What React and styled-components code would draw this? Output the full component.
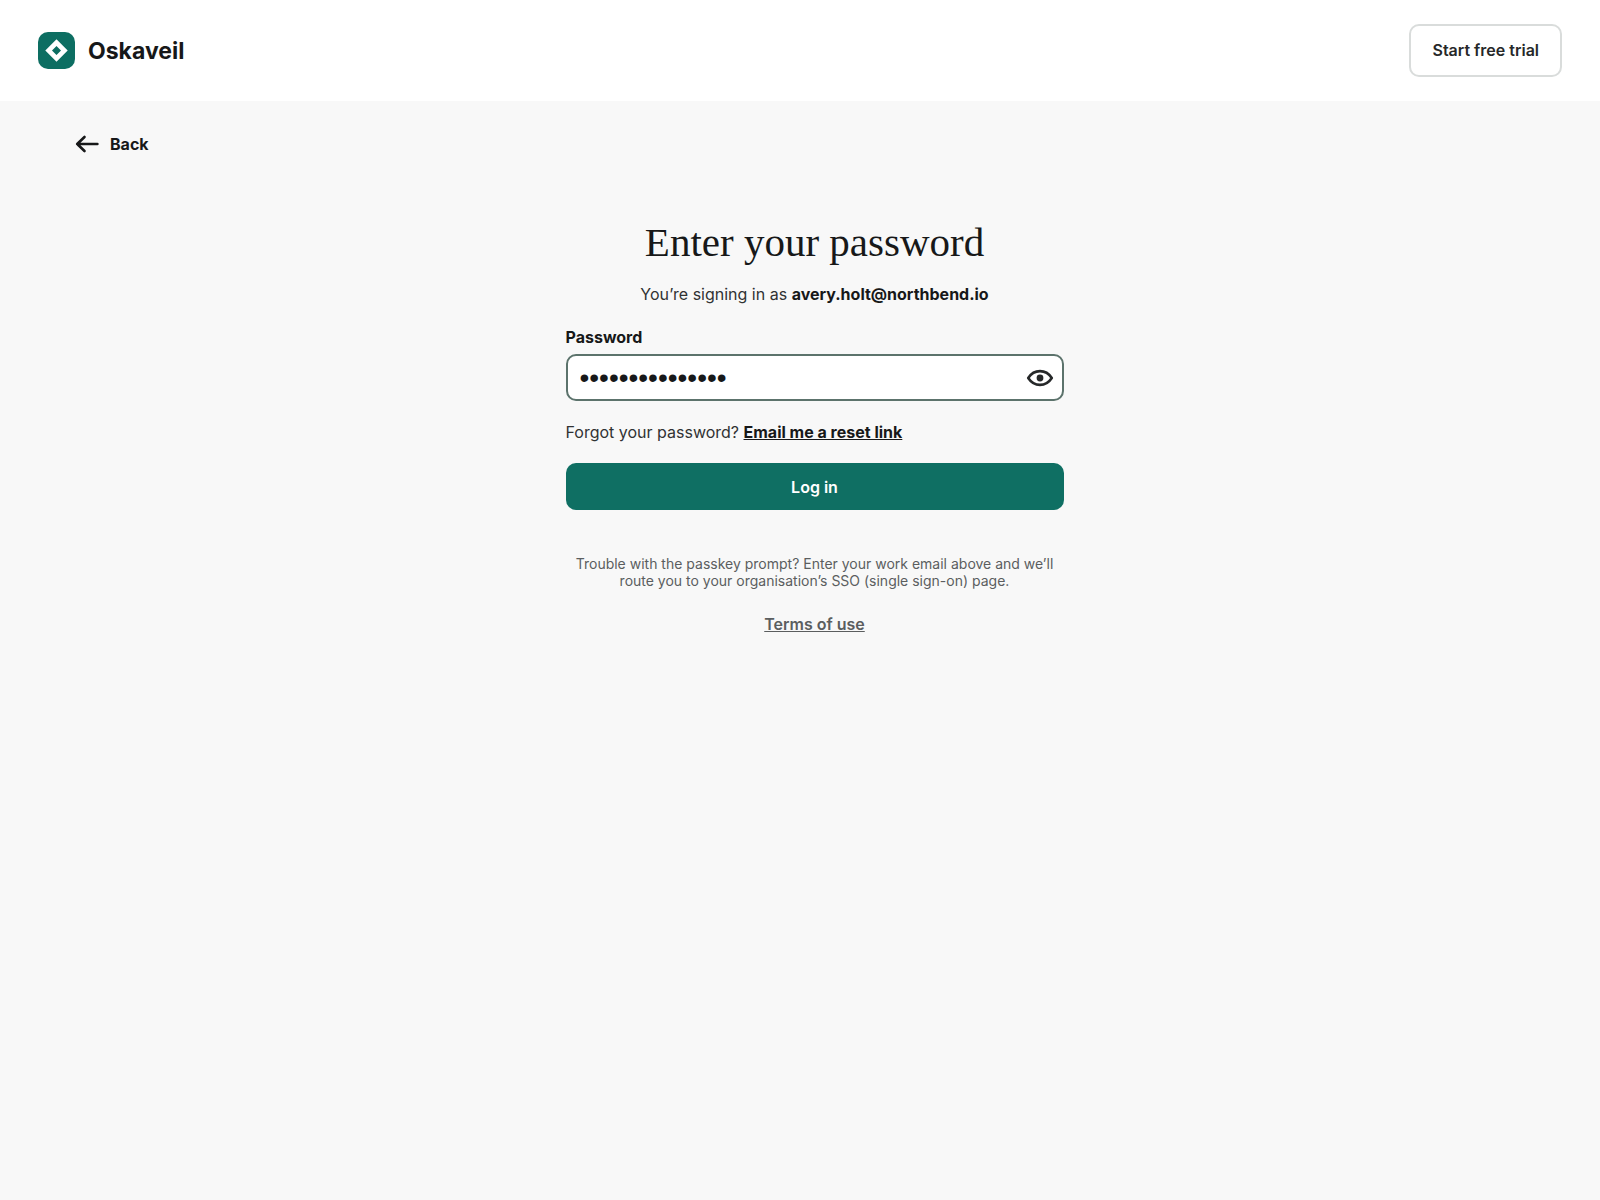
import React, { useState } from 'react'
import styled, { createGlobalStyle } from 'styled-components'

function App() {
   const [password, setPassword] = useState('northbend-login')
   const [visible, setVisible] = useState(false)
   return (
      <Page>
         <GlobalStyle />
         <Header>
            <Brand href="#">
               <LogoMark viewBox="0 0 37 37" aria-hidden="true">
                  <rect width="37" height="37" rx="10" fill="#0d6e62" />
                  <path
                     fill="#fff"
                     fillRule="evenodd"
                     d="M18.5 7.3 29.7 18.5 18.5 29.7 7.3 18.5ZM18.5 14 14 18.5 18.5 23 23 18.5Z"
                  />
               </LogoMark>
               Oskaveil
            </Brand>
            <TrialButton type="button">Start free trial</TrialButton>
         </Header>
         <Main>
            <BackLink href="#">
               <svg viewBox="0 0 24 18" aria-hidden="true">
                  <path d="M9.5 2 2.2 9 9.5 16M2.2 9H22.4" />
               </svg>
               Back
            </BackLink>
            <Content>
               <Title>Enter your password</Title>
               <Subtitle>
                  You’re signing in as <strong>avery.holt@northbend.io</strong>
               </Subtitle>
               <Form onSubmit={(e) => e.preventDefault()}>
                  <Label htmlFor="password">Password</Label>
                  <Field>
                     <Input
                        id="password"
                        type={visible ? 'text' : 'password'}
                        value={password}
                        onChange={(e) => setPassword(e.target.value)}
                     />
                     <Toggle
                        type="button"
                        aria-label="Show password"
                        onClick={() => setVisible(!visible)}
                     >
                        <svg viewBox="0 0 28 18" aria-hidden="true">
                           <path d="M2.2 9C5 4.7 9.2 2.1 14 2.1S23 4.7 25.8 9C23 13.3 18.8 15.9 14 15.9S5 13.3 2.2 9Z" />
                           <circle cx="14" cy="9" r="3.4" />
                        </svg>
                     </Toggle>
                  </Field>
                  <Forgot>
                     Forgot your password? <a href="#">Email me a reset link</a>
                  </Forgot>
                  <Submit type="submit">Log in</Submit>
               </Form>
               <Note>
                  Trouble with the passkey prompt? Enter your work email above and
                  we’ll route you to your organisation’s SSO (single sign-on) page.
               </Note>
               <Terms href="#">Terms of use</Terms>
            </Content>
         </Main>
      </Page>
   )
}

export default App

const GlobalStyle = createGlobalStyle`
   * {
      box-sizing: border-box;
   }
   body {
      margin: 0;
      background: #f8f8f8;
      color: #171819;
      font-family: Inter, 'Liberation Sans', sans-serif;
      font-size: 16px;
      line-height: 20px;
   }
   button,
   input {
      font: inherit;
   }
`
const Page = styled.div`
   display: flex;
   flex-direction: column;
   min-height: 100vh;
`
const Header = styled.header`
   display: flex;
   justify-content: space-between;
   align-items: center;
   padding: 24px 38px;
   background: #fff;
`
const Brand = styled.a`
   display: flex;
   align-items: center;
   gap: 13px;
   color: #171819;
   font-size: 23px;
   font-weight: 700;
   text-decoration: none;
`
const LogoMark = styled.svg`
   width: 37px;
   height: 37px;
`
const TrialButton = styled.button`
   padding: 14px 21px;
   border: 2px solid #d9dcdb;
   border-radius: 10px;
   background: #fff;
   color: #262829;
   line-height: 21px;
   font-weight: 600;
   cursor: pointer;
`
const Main = styled.main`
   display: flex;
   flex-direction: column;
   padding: 33px 46px 64px 75px;
`
const BackLink = styled.a`
   display: flex;
   align-items: center;
   align-self: flex-start;
   gap: 11px;
   color: #171819;
   font-weight: 700;
   text-decoration: none;
   svg {
      width: 24px;
      height: 18px;
      fill: none;
      stroke: currentColor;
      stroke-width: 2.6;
      stroke-linecap: round;
      stroke-linejoin: round;
   }
`
const Content = styled.div`
   display: flex;
   flex-direction: column;
   align-items: center;
   width: 100%;
   max-width: 498px;
   margin: 64px auto 0;
   text-align: center;
`
const Title = styled.h1`
   margin: 0;
   font-family: 'Liberation Serif', serif;
   font-size: 41px;
   font-weight: 400;
   line-height: 48px;
`
const Subtitle = styled.p`
   margin: 18px 0 0;
   color: #303233;
   strong {
      color: #171819;
      font-weight: 700;
   }
`
const Form = styled.form`
   display: flex;
   flex-direction: column;
   width: 100%;
   margin-top: 23px;
   text-align: left;
`
const Label = styled.label`
   font-weight: 700;
`
const Field = styled.div`
   display: flex;
   align-items: center;
   height: 47px;
   margin-top: 7px;
   padding-right: 8px;
   border: 2px solid #5c736c;
   border-radius: 10px;
   background: #fff;
`
const Input = styled.input`
   flex: 1;
   min-width: 0;
   height: 100%;
   padding: 0 12px;
   border: 0;
   outline: 0;
   background: transparent;
   color: #171819;
   &[type='password'] {
      font-family: 'Liberation Sans', sans-serif;
      font-size: 28px;
   }
`
const Toggle = styled.button`
   display: flex;
   padding: 0;
   border: 0;
   background: transparent;
   color: #262829;
   cursor: pointer;
   svg {
      width: 28px;
      height: 18px;
   }
   path {
      fill: none;
      stroke: currentColor;
      stroke-width: 2.6;
      stroke-linejoin: round;
   }
   circle {
      fill: currentColor;
   }
`
const Forgot = styled.p`
   margin: 21px 0;
   color: #303233;
   a {
      color: #171819;
      font-weight: 700;
   }
`
const Submit = styled.button`
   height: 47px;
   border: 0;
   border-radius: 10px;
   background: #0f6f63;
   color: #fff;
   font-weight: 600;
   cursor: pointer;
`
const Note = styled.p`
   margin: 45px 0 0;
   color: #5b5e5f;
   font-size: 14px;
   line-height: 17px;
`
const Terms = styled.a`
   margin-top: 25px;
   color: #5b5e5f;
   font-weight: 600;
`
